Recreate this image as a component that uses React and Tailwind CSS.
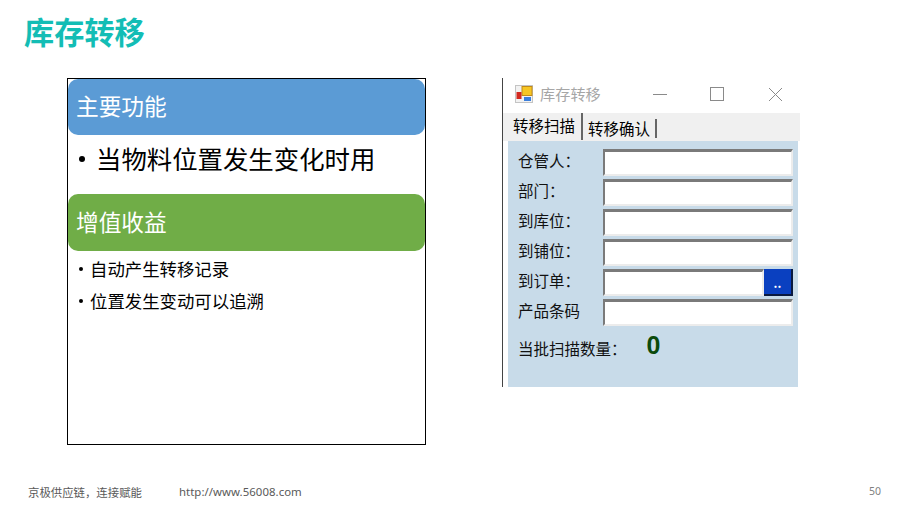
const CJK = "font-['Noto_Sans_CJK_SC',sans-serif]";

function Field({ label, button }) {
  return (
    <div className="flex items-center h-[30px]">
      <div className="w-[95px] pl-[10px] pb-[3px] text-[15.5px] leading-none text-[#111]">{label}</div>
      <div className="flex w-[190px] h-[27px]">
        <div className="flex-1 bg-white border-t-[3px] border-l-2 border-t-[#7a7a7a] border-l-[#7a7a7a] border-b-2 border-r-2 border-b-[#ececec] border-r-[#ececec]" />
        {button && (
          <div className="w-[29px] h-[27px] bg-[#0a40c0] border-r-2 border-b-2 border-[#0a1a40] flex items-end justify-center pb-[5px]">
            <span className="text-white text-[12px] font-bold leading-none">..</span>
          </div>
        )}
      </div>
    </div>
  );
}

function Bullet({ size, gap, children, className }) {
  return (
    <div className={"flex items-center pl-[11px] text-black " + className}>
      <span className={"rounded-full bg-black shrink-0 " + size} />
      <span className={gap}>{children}</span>
    </div>
  );
}

export default function App() {
  return (
    <div className={"w-[907px] h-[509px] bg-white overflow-hidden flex flex-col " + CJK}>
      <div className="h-[78px] pl-[24px] pt-[9px] text-[30.2px] leading-[44px] font-bold text-[#13bdb5]">库存转移</div>

      <div className="flex items-start h-[367px]">
        <div className="ml-[67px] w-[359px] h-[367px] border border-black">
          <div className="h-[56px] bg-[#5b9bd5] rounded-[10px] flex items-center pl-[8px] pb-[2px] text-white text-[22.7px] leading-none">主要功能</div>
          <Bullet size="w-[6px] h-[6px]" gap="ml-[11px]" className="h-[59px] pb-[11px] text-[25.4px] leading-none">当物料位置发生变化时用</Bullet>
          <div className="h-[57px] bg-[#70ad47] rounded-[10px] flex items-center pl-[8px] text-white text-[22.7px] leading-none">增值收益</div>
          <Bullet size="w-[4px] h-[4px]" gap="ml-[7px]" className="mt-[2px] h-[32px] text-[17.4px] leading-none">自动产生转移记录</Bullet>
          <Bullet size="w-[4px] h-[4px]" gap="ml-[7px]" className="h-[32px] text-[17.4px] leading-none">位置发生变动可以追溯</Bullet>
        </div>

        <div className="ml-[76px] w-[298px] h-[309px] border-l border-[#444] bg-white flex flex-col">
          <div className="h-[35px] flex items-center shrink-0 pb-[3px]">
            <svg className="ml-[12px]" width="18" height="18" viewBox="0 0 18 18">
              <rect x="0.5" y="0.5" width="17" height="17" fill="#f2f2f2" stroke="#c4c4c4" />
              <rect x="7" y="1.5" width="10" height="9" fill="#f7c623" stroke="#c08a1a" />
              <rect x="1.5" y="7" width="5" height="7" fill="#d3291f" />
              <rect x="9" y="12" width="7" height="4" fill="#3b7fdc" />
            </svg>
            <span className="ml-[7px] text-[15.2px] leading-none text-[#a6a6a6]">库存转移</span>
            <svg className="ml-[52px]" width="14" height="14" viewBox="0 0 14 14"><path d="M0 7.5H14" stroke="#8a8a8a" /></svg>
            <svg className="ml-[43px]" width="14" height="14" viewBox="0 0 14 14"><rect x="0.5" y="0.5" width="13" height="13" fill="none" stroke="#8a8a8a" /></svg>
            <svg className="ml-[44px]" width="15" height="15" viewBox="0 0 15 15"><path d="M1 1L14 14M14 1L1 14" stroke="#8a8a8a" /></svg>
          </div>
          <div className="h-[28px] bg-[#f0f0f0] flex items-start pl-[4px] shrink-0">
            <div className="h-[27px] w-[76px] border-r-2 border-[#666] text-[15.5px] leading-[25px] text-black pl-[6px]">转移扫描</div>
            <div className="mt-[6px] h-[19px] w-[74px] border-r-2 border-[#666] text-[15.5px] leading-[19px] text-black pl-[5px]">转移确认</div>
          </div>
          <div className="pl-[5px] pr-[2px] flex-1 min-h-0 flex bg-white">
            <div className="flex-1 bg-[#c8dbe9] pt-[6px]">
              <Field label="仓管人：" />
              <Field label="部门：" />
              <Field label="到库位：" />
              <Field label="到铺位：" />
              <Field label="到订单：" button />
              <Field label="产品条码" />
              <div className="flex items-start pl-[10px] mt-[6px]">
                <span className="mt-[8px] text-[15.5px] leading-none text-[#111]">当批扫描数量：</span>
                <span className="ml-[20px] font-['Liberation_Sans',sans-serif] text-[25px] font-bold leading-none text-[#0b4a0b]">0</span>
              </div>
            </div>
          </div>
        </div>
      </div>

      <div className="flex-1 flex items-start pt-[39px] pl-[28px] pr-[26px] text-[#595959]">
        <span className="text-[11.4px] leading-[16px]">京极供应链，连接赋能</span>
        <span className="ml-[37px] text-[11.4px] leading-[16px] tracking-[0.05px] font-['Noto_Sans',sans-serif]">http://www.56008.com</span>
        <span className="ml-auto text-[10.5px] leading-[14px] text-[#7f7f7f] font-['Noto_Sans',sans-serif]">50</span>
      </div>
    </div>
  );
}
